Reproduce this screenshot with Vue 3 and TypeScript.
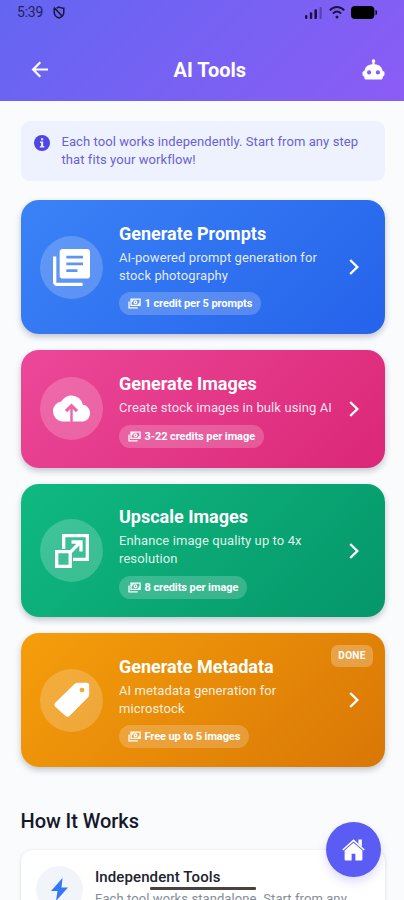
<script setup lang="ts">
interface Tool {
  id: string
  title: string
  lines: string[]
  cost: string
  done?: boolean
}

const tools: Tool[] = [
  { id: 'prompts', title: 'Generate Prompts', lines: ['AI-powered prompt generation for', 'stock photography'], cost: '1 credit per 5 prompts' },
  { id: 'images', title: 'Generate Images', lines: ['Create stock images in bulk using AI'], cost: '3-22 credits per image' },
  { id: 'upscale', title: 'Upscale Images', lines: ['Enhance image quality up to 4x', 'resolution'], cost: '8 credits per image' },
  { id: 'metadata', title: 'Generate Metadata', lines: ['AI metadata generation for', 'microstock'], cost: 'Free up to 5 images', done: true },
]
</script>

<template>
  <div class="screen">
    <header class="top">
      <div class="status">
        <span class="time">5:39</span>
        <svg class="shield" viewBox="0 0 12 13" fill="none" stroke="currentColor" stroke-width="1.5">
          <path d="M3.500 2C4.500 1.900 5.300 1.500 6 1c1.500 1 3 1.200 4.800 1.300v4C10.800 9 9 11 6 12 3 11 1.200 9 1.200 6.300V2.600M1 1.600 9.200 10.200" />
        </svg>
        <span class="grow"></span>
        <svg class="signal" viewBox="0 0 17 13" fill="currentColor">
          <rect x="0" y="9" width="2.4" height="4" rx="1" />
          <rect x="4.8" y="6.3" width="2.4" height="6.7" rx="1" />
          <rect x="9.4" y="3.3" width="2.6" height="9.7" rx="1" />
          <rect x="14.5" y="1" width="2.2" height="12" rx="1" opacity=".4" />
        </svg>
        <svg class="wifi" viewBox="0 0 16 13" fill="none" stroke="currentColor" stroke-width="1.9">
          <path d="M.8 4.4C5-.1 11-.1 15.2 4.4M3.800 7.600c2.600-2.500 5.800-2.500 8.400 0" />
          <circle cx="8" cy="10.900" r="1.500" fill="currentColor" stroke="none" />
        </svg>
        <svg class="battery" viewBox="0 0 27 13" fill="currentColor">
          <rect width="23.4" height="13" rx="4" />
          <path d="M24.500 4c2.200.2 2.200 4.800 0 5z" />
        </svg>
      </div>
      <div class="bar">
        <svg class="back" viewBox="0 0 18 18" fill="none" stroke="#fff" stroke-width="2.200">
          <path d="M17 9.500H2.500M9.300 2.300 2.100 9.500l7.200 7.200" />
        </svg>
        <h1>AI Tools</h1>
        <svg class="robot" viewBox="0 0 23 21" fill="#fff" fill-rule="evenodd">
          <path d="M11.500.3a1.800 1.800 0 0 1 1.100 3.200v1.700C17.500 5.500 20 8.300 20.600 12c1.300.1 1.900.7 1.900 1.800v1.700c0 1.200-.7 1.800-1.700 1.900v.8c0 1.500-.8 2.300-2.300 2.300h-14c-1.500 0-2.300-.8-2.300-2.300v-.8C1.200 17.300.5 16.700.5 15.500v-1.700c0-1.100.6-1.700 1.900-1.800C3 8.300 5.500 5.500 10.400 5.200V3.500A1.800 1.800 0 0 1 11.500.3zM7.100 11.300a2.100 2.100 0 1 0 0 4.200 2.100 2.100 0 0 0 0-4.200zm8.800 0a2.100 2.100 0 1 0 0 4.200 2.100 2.100 0 0 0 0-4.200z" />
        </svg>
      </div>
    </header>

    <main class="content">
      <section class="notice">
        <svg viewBox="0 0 16 16">
          <circle cx="8" cy="8" r="8" fill="#4f46e5" />
          <path d="M7 3.200h2.200v2H7zM6 6.600h3.200v4.500h1.100v1.500H5.900v-1.500H7V8.100H6z" fill="#e4e7ff" />
        </svg>
        <p>Each tool works independently. Start from any step<br />that fits your workflow!</p>
      </section>

      <section class="tools">
        <article v-for="tool in tools" :key="tool.id" class="card" :class="[tool.id, { short: tool.lines.length === 1 }]">
          <div class="disc">
            <svg v-if="tool.id === 'prompts'" viewBox="2 2 20 20" class="glyph" fill="#fff">
              <path d="M2 6v14c0 1.100.9 2 2 2h14v-1.800H3.800V6z" />
              <path fill-rule="evenodd" d="M7.300 2h13A1.700 1.700 0 0 1 22 3.700V16.300A1.700 1.700 0 0 1 20.300 18H7.300a1.700 1.700 0 0 1-1.700-1.700V3.700A1.700 1.700 0 0 1 7.300 2zM9.200 5.700v1.500h9V5.700zm0 3.600v1.500h9V9.300zm0 3.600v1.500h6v-1.500z" />
            </svg>
            <svg v-else-if="tool.id === 'images'" viewBox="0 4 24 17" class="glyph cloud" fill="#fff">
              <path fill-rule="evenodd" d="M19.350 10.040A7.490 7.490 0 0 0 12 4C9.110 4 6.600 5.640 5.350 8.040A5.994 5.994 0 0 0 0 14c0 3.900 3 7 6.500 7H11.200v-8.100l-2 2-1.500-1.400L12 9.200l4.300 4.300-1.500 1.400-2-2V21H18.500C21.800 21 24 18.500 24 15.500c0-2.900-2.100-5.250-4.650-5.460z" />
            </svg>
            <svg v-else-if="tool.id === 'upscale'" viewBox="0 0 34 34" class="glyph" fill="none" stroke="#fff" stroke-width="3.300">
              <path d="M8.700 15V1.700h23.600v23.600H18M1.700 17.700h13.500v14.600H1.700zM15 18.500 25.500 8M16.500 8h9.500v9.500" />
            </svg>
            <svg v-else viewBox="0 0 36 36" class="glyph" fill="#fff">
              <path fill-rule="evenodd" d="M20 2.500Q21.500.8 24 .8h8.500q2.700 0 2.700 2.700V12q0 2-1.400 3.500L16 33.500q-2.500 2.400-5 0L1.500 25q-2.200-2.300 0-4.500zM28 5.700a2.400 2.400 0 1 0 0 4.800 2.400 2.400 0 0 0 0-4.800z" />
            </svg>
          </div>
          <div class="text">
            <h2>{{ tool.title }}</h2>
            <p><span v-for="line in tool.lines" :key="line">{{ line }}</span></p>
            <div class="cost">
              <svg viewBox="0 0 14 12" fill="none" stroke="#fff" stroke-width="1.400">
                <path d="M3.200 1.200h9.900v6.900H3.200zM1 3.800v6.900h9.500M3.500 4.500 6 1.500M10.500 8 13 5" />
                <circle cx="8.100" cy="4.700" r="1.500" />
              </svg>
              <span>{{ tool.cost }}</span>
            </div>
          </div>
          <svg class="chevron" viewBox="0 0 10 16" fill="none" stroke="#fff" stroke-width="2.400">
            <path d="M1.200 1 8.300 8l-7.100 7" />
          </svg>
          <span v-if="tool.done" class="done">DONE</span>
        </article>
      </section>

      <h2 class="heading">How It Works</h2>
      <section class="how">
        <div class="bolt">
          <svg viewBox="0 0 17 23"><path d="M11.500 0 0 13h6.500L5 23 17 9.500h-6.500z" fill="#3478f6" /></svg>
        </div>
        <div class="how-text">
          <h3>Independent Tools</h3>
          <p>Each tool works standalone. Start from any</p>
        </div>
      </section>
    </main>

    <div class="home-line"></div>
    <button class="fab" aria-label="Home">
      <svg viewBox="0 0 22 22" fill="#fff">
        <path fill-rule="evenodd" d="M11 4.500 19.500 12V20.500q0 1-1 1H3.500q-1 0-1-1V12zM9.200 15v6.500h3.600V15z" />
        <path d="M.7 11.500 11 2.200l10.300 9.300" fill="none" stroke="#fff" stroke-width="1.500" />
        <path d="M15.700 1.500h3.300v7l-3.300-3z" />
      </svg>
    </button>
  </div>
</template>

<style>
body { margin: 0; overflow: hidden; }
</style>

<style scoped>
* { box-sizing: border-box; }
h1, h2, h3, p { margin: 0; }
svg { display: block; flex: none; }
.screen {
  position: relative;
  width: 404px;
  height: 900px;
  overflow: hidden;
  background: #f9fbfd;
  font-family: Roboto, "Liberation Sans", sans-serif;
}
.top {
  height: 100.500px;
  background: linear-gradient(135deg, #6366f1, #8b5cf6);
}
.status {
  display: flex;
  height: 24px;
  padding: 0 26px 0 17px;
  align-items: center;
  color: #19143c;
}
.time { width: 27px; font-size: 14px; letter-spacing: -0.200px; opacity: .85; }
.shield { width: 12px; height: 13px; margin-left: 9px; }
.grow { flex: 1; }
.signal { width: 17px; height: 13px; }
.wifi { width: 16px; height: 13px; margin-left: 7px; }
.battery { width: 27px; height: 13px; margin-left: 6px; color: #000; }
.bar {
  display: flex;
  height: 75px;
  padding: 0 19.500px 0 31px;
  align-items: center;
  justify-content: space-between;
}
.back { width: 18px; height: 18px; margin-top: 15px; }
h1 { margin: 17px 0 0 9px; color: #fff; font-size: 20px; line-height: 24px; font-weight: 700; }
.robot { width: 23px; height: 21px; margin-top: 15px; }
.content { padding: 20.500px 19px 0 20.500px; }
.notice {
  display: flex;
  height: 60px;
  padding: 12px 13.500px;
  gap: 11.500px;
  border-radius: 9px;
  background: #eef2ff;
}
.notice svg { width: 16px; height: 16px; margin-top: 1.500px; }
.notice p { color: #6a5fd6; font-size: 13px; line-height: 18px; letter-spacing: .075px; white-space: nowrap; }
.tools { display: flex; flex-direction: column; gap: 16px; margin-top: 19.400px; }
.card {
  position: relative;
  display: flex;
  height: 133.500px;
  padding: 0 26px 0 19.500px;
  align-items: center;
  border-radius: 18px;
  box-shadow: 0 3px 6px rgba(20, 30, 50, .24);
}
.card.short { height: 118px; }
.prompts { background: linear-gradient(135deg, #3b82f6, #2563eb); }
.images { background: linear-gradient(135deg, #ec4899, #db2777); }
.upscale { background: linear-gradient(135deg, #10b981, #059669); }
.metadata { background: linear-gradient(135deg, #f59e0b, #d97706); }
.disc {
  display: flex;
  flex: none;
  width: 63px;
  height: 63px;
  align-items: center;
  justify-content: center;
  border-radius: 50%;
  background: rgba(255, 255, 255, .2);
}
.glyph { width: 37px; height: 37px; }
.cloud { height: 27px; }
.upscale .glyph { width: 34px; height: 34px; }
.metadata .glyph { width: 36px; height: 36px; }
.text { flex: 1; margin-left: 16px; padding-top: 2.500px; white-space: nowrap; }
.text h2 { color: #fff; font-size: 18px; line-height: 24px; font-weight: 700; }
.text p { margin-top: 3px; color: rgba(255, 255, 255, .88); font-size: 13px; line-height: 18px; letter-spacing: .095px; }
.text p span { display: block; }
.cost {
  display: flex;
  width: fit-content;
  height: 23px;
  margin-top: 7.500px;
  padding: 0 8.500px;
  gap: 4px;
  align-items: center;
  border-radius: 12px;
  background: rgba(255, 255, 255, .2);
  color: #fff;
  font-size: 11px;
  font-weight: 700;
  letter-spacing: -0.080px;
}
.cost svg { width: 13px; height: 11px; }
.chevron { width: 10px; height: 16px; }
.done {
  position: absolute;
  top: 12px;
  right: 12px;
  width: 42px;
  height: 22px;
  border-radius: 7px;
  background: rgba(255, 255, 255, .25);
  color: #fff;
  font-size: 10px;
  line-height: 22px;
  font-weight: 700;
  letter-spacing: .3px;
  text-align: center;
}
.heading { margin-top: 42.300px; color: #15182b; font-size: 20px; line-height: 24px; font-weight: 500; letter-spacing: -0.060px; }
.how {
  display: flex;
  height: 90px;
  margin-top: 17px;
  padding: 15.500px;
  border-radius: 12px;
  background: #fff;
  box-shadow: 0 1px 4px rgba(20, 30, 50, .12);
}
.bolt {
  display: flex;
  flex: none;
  width: 47px;
  height: 47px;
  align-items: center;
  justify-content: center;
  border-radius: 50%;
  background: #f1f5f9;
}
.bolt svg { width: 17px; height: 23px; }
.how-text { margin-left: 12px; padding-top: 1px; white-space: nowrap; }
.how-text h3 { color: #20232f; font-size: 15px; line-height: 20px; font-weight: 500; letter-spacing: .1px; }
.how-text p { margin-top: 3.500px; color: #858c98; font-size: 13px; line-height: 18px; letter-spacing: .080px; }
.home-line {
  position: absolute;
  top: 887px;
  left: 150px;
  width: 106px;
  height: 3px;
  border-radius: 1px;
  background: #45423f;
}
.fab {
  position: absolute;
  top: 821.500px;
  left: 326px;
  display: flex;
  width: 55px;
  height: 55px;
  padding: 0;
  align-items: center;
  justify-content: center;
  border: 0;
  border-radius: 50%;
  background: #5b5cf3;
  box-shadow: 0 5px 10px rgba(91, 92, 243, .2);
}
.fab svg { width: 23px; height: 23px; }
</style>
